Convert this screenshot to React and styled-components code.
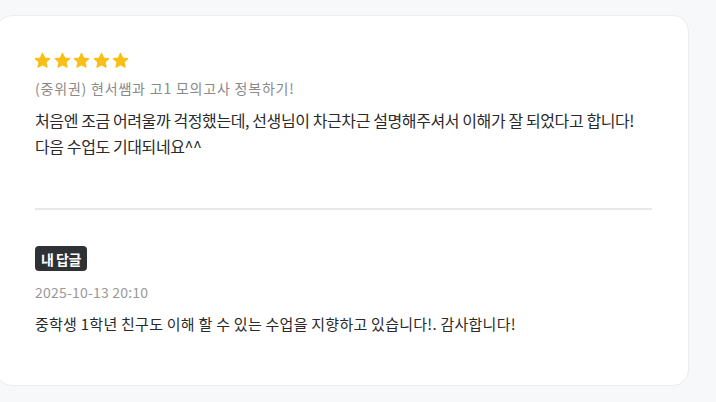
import React from "react";
import styled, { createGlobalStyle } from "styled-components";

const GlobalStyle = createGlobalStyle`
  html, body {
    margin: 0;
    padding: 0;
    background: #f7f8fa;
    font-family: "Noto Sans CJK KR", "Noto Sans", sans-serif;
  }
`;

const Page = styled.div`
  width: 716px;
  height: 402px;
  padding-top: 15px;
  box-sizing: border-box;
  overflow: hidden;
`;

const Card = styled.div`
  margin-left: -4px;
  width: 693px;
  height: 371px;
  box-sizing: border-box;
  background: #fff;
  border: 1px solid #ebedf0;
  border-radius: 16px;
  padding: 36px 36px 0 38px;
`;

const Stars = styled.div`
  display: flex;
  gap: 2.5px;
  height: 16px;
  margin-left: -1px;
`;

const Title = styled.div`
  margin-top: 10px;
  font-size: 14px;
  color: #8a8a8a;
  letter-spacing: 0.8px;
  line-height: 20px;
`;

const Body = styled.p`
  margin: 9px 0 0;
  font-size: 16px;
  line-height: 26px;
  color: #2a2a2a;
  letter-spacing: -0.4px;
`;

const Divider = styled.hr`
  margin: 49px 0 0;
  border: 0;
  height: 2px;
  background: #e8e8e8;
  width: 617px;
`;

const Badge = styled.span`
  display: inline-flex;
  align-items: center;
  margin-top: 36px;
  height: 25px;
  padding: 0 6px;
  border-radius: 4px;
  background: #2e3235;
  color: #fff;
  font-size: 14px;
  font-weight: 700;
  letter-spacing: -0.5px;
`;

const Date = styled.div`
  margin-top: 11px;
  font-size: 14px;
  color: #999;
  line-height: 20px;
  letter-spacing: 0.2px;
`;

const Reply = styled.p`
  margin: 12px 0 0;
  font-size: 15px;
  line-height: 20px;
  color: #2a2a2a;
  letter-spacing: 0.25px;
`;

function Star() {
  return (
    <svg width="17" height="17" viewBox="0 0 24 24">
      <path
        d="M12 1.8l3.1 6.6 7.2.9-5.3 5 1.4 7.1L12 17.9l-6.4 3.5 1.4-7.1-5.3-5 7.2-.9z"
        fill="#f9bf17"
        stroke="#f9bf17"
        strokeWidth="1.6"
        strokeLinejoin="round"
      />
    </svg>
  );
}

export default function App() {
  return (
    <Page>
      <GlobalStyle />
      <Card>
        <Stars>
          {[0, 1, 2, 3, 4].map((i) => (
            <Star key={i} />
          ))}
        </Stars>
        <Title>(중위권) 현서쌤과 고1 모의고사 정복하기!</Title>
        <Body>
          처음엔 조금 어려울까 걱정했는데, 선생님이 차근차근 설명해주셔서 이해가 잘 되었다고 합니다!
          <br />
          다음 수업도 기대되네요^^
        </Body>
        <Divider />
        <Badge>내 답글</Badge>
        <Date>2025-10-13 20:10</Date>
        <Reply>중학생 1학년 친구도 이해 할 수 있는 수업을 지향하고 있습니다!. 감사합니다!</Reply>
      </Card>
    </Page>
  );
}
